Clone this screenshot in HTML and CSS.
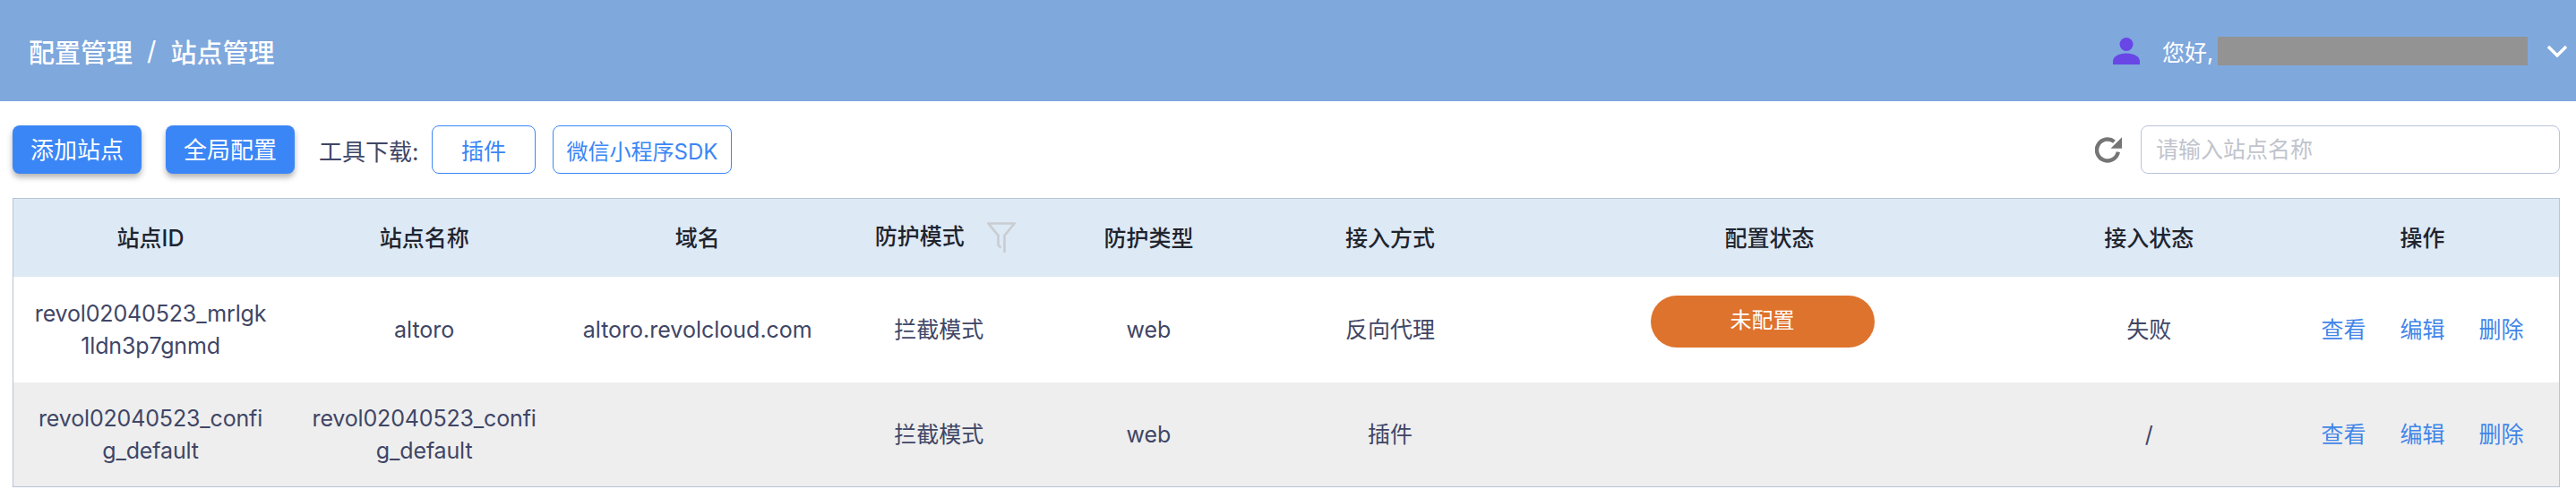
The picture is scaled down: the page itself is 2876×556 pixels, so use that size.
FILE: index.html
```html
<!DOCTYPE html>
<html lang="zh-CN">
<head>
    <meta charset="UTF-8">
    <meta name="viewport" content="width=device-width, initial-scale=1.0">
    <title>站点管理</title>
    <link rel="stylesheet" href="styles.css">
</head>
<body>
    <header class="topbar">
        <div class="breadcrumb">
            <span>配置管理</span>
            <span class="breadcrumb-sep">/</span>
            <span>站点管理</span>
        </div>
        <div class="user">
            <svg class="user-icon" viewBox="0 0 30 30" aria-hidden="true">
                <circle cx="15" cy="7.5" r="7.5" fill="#6847e6"/>
                <path d="M0 30v-3.5C0 21 6.5 17.5 15 17.5s15 3.5 15 9V30z" fill="#6847e6"/>
            </svg>
            <span class="user-hello">您好,</span>
            <span class="user-name"></span>
            <svg class="user-arrow" viewBox="0 0 22 14" aria-hidden="true">
                <path d="M1 2l10 10L21 2" fill="none" stroke="#fff" stroke-width="3.4"/>
            </svg>
        </div>
    </header>

    <div class="toolbar">
        <button class="btn btn-primary" type="button">添加站点</button>
        <button class="btn btn-primary" type="button">全局配置</button>
        <span class="tool-label">工具下载:</span>
        <button class="btn btn-outline btn-plugin" type="button">插件</button>
        <button class="btn btn-outline btn-sdk" type="button">微信小程序SDK</button>
        <svg class="refresh" viewBox="0 0 30 30" aria-hidden="true">
            <path d="M25.8 17.7A12 12 0 1 1 21.5 6.1" fill="none" stroke="#757575" stroke-width="4.4"/>
            <path d="M30 1.3v12.4H17.5z" fill="#757575"/>
        </svg>
        <input class="search" type="text" placeholder="请输入站点名称">
    </div>

    <div class="table-wrap">
        <table class="site-table">
            <colgroup>
                <col class="col-first">
                <col class="col-wide">
                <col class="col-wide">
                <col class="col-mode">
                <col class="col-mode">
                <col class="col-wide">
                <col class="col-status">
                <col class="col-wide">
                <col class="col-wide">
            </colgroup>
            <thead>
                <tr>
                    <th>站点ID</th>
                    <th>站点名称</th>
                    <th>域名</th>
                    <th class="th-filter">防护模式<svg class="filter" viewBox="0 0 32 36" aria-hidden="true">
                            <path d="M15.5 28.5l-3-2.5V15L1.5 1.5h29L19.5 15v19" fill="none" stroke="#c9cdd1" stroke-width="2.6"/>
                        </svg></th>
                    <th>防护类型</th>
                    <th>接入方式</th>
                    <th>配置状态</th>
                    <th>接入状态</th>
                    <th>操作</th>
                </tr>
            </thead>
            <tbody>
                <tr class="row-first">
                    <td class="id-cell">revol02040523_mrlgk1ldn3p7gnmd</td>
                    <td>altoro</td>
                    <td>altoro.revolcloud.com</td>
                    <td>拦截模式</td>
                    <td>web</td>
                    <td>反向代理</td>
                    <td><span class="pill">未配置</span></td>
                    <td>失败</td>
                    <td class="actions"><a href="#">查看</a><a href="#">编辑</a><a href="#">删除</a></td>
                </tr>
                <tr class="row-second">
                    <td class="id-cell">revol02040523_config_default</td>
                    <td class="id-cell">revol02040523_config_default</td>
                    <td></td>
                    <td>拦截模式</td>
                    <td>web</td>
                    <td>插件</td>
                    <td></td>
                    <td>/</td>
                    <td class="actions"><a href="#">查看</a><a href="#">编辑</a><a href="#">删除</a></td>
                </tr>
            </tbody>
        </table>
    </div>
</body>
</html>
```

FILE: styles.css
```css
* {
    box-sizing: border-box;
}
body {
    margin: 0;
    font-family: Inter, "Noto Sans CJK SC", sans-serif;
    font-size: 25px;
    color: #3f4666;
    background-color: #fff;
}
.topbar {
    height: 113px;
    padding: 0 10px 0 32px;
    display: flex;
    align-items: center;
    justify-content: space-between;
    background-color: #7fa8dd;
    color: #fff;
}
.breadcrumb {
    display: flex;
    align-items: center;
    font-size: 29px;
    font-weight: 500;
}
.breadcrumb-sep {
    margin: 0 16px;
    font-weight: 400;
}
.user {
    display: flex;
    align-items: center;
}
.user-icon {
    width: 30px;
    height: 30px;
    margin-right: 25px;
}
.user-hello {
    width: 62px;
}
.user-name {
    width: 346px;
    height: 32px;
    background-color: #939393;
}
.user-arrow {
    width: 22px;
    height: 14px;
    margin-left: 22px;
}
.toolbar {
    height: 54px;
    margin: 27px 18px 27px 14px;
    display: flex;
    align-items: center;
}
.btn {
    height: 54px;
    padding: 0;
    font-family: inherit;
    font-size: 25px;
    border-radius: 8px;
    cursor: pointer;
}
.btn-primary {
    width: 144px;
    margin-right: 27px;
    padding-bottom: 3px;
    font-size: 26px;
    color: #fff;
    background-color: #3b86f6;
    border: none;
    box-shadow: 0 4px 6px rgba(0, 0, 0, 0.3);
}
.btn-outline {
    color: #3b86f6;
    background-color: #fff;
    border: 1px solid #3b86f6;
}
.btn-plugin {
    width: 116px;
    margin-right: 19px;
}
.btn-sdk {
    width: 200px;
    font-size: 24px;
}
.tool-label {
    width: 126px;
    font-size: 26px;
    white-space: nowrap;
}
.refresh {
    width: 30px;
    height: 30px;
    margin-left: auto;
    margin-right: 21px;
}
.search {
    width: 468px;
    height: 54px;
    padding: 0 16px;
    font-family: inherit;
    font-size: 25px;
    border: 1px solid #b9c3dc;
    border-radius: 8px;
}
.search::placeholder {
    color: #c0c4cc;
}
.table-wrap {
    margin: 0 18px 0 14px;
    border: 1px solid #b8c4d6;
}
.site-table {
    width: 100%;
    table-layout: fixed;
    border-collapse: collapse;
}
.col-first {
    width: 306px;
}
.col-wide {
    width: 305px;
}
.col-mode {
    width: 234px;
}
.col-status {
    width: 542px;
}
.site-table th {
    height: 87px;
    padding: 0 0 3px;
    font-weight: 500;
    color: #20242e;
    text-align: center;
    background-color: #dde9f5;
}
.site-table td {
    padding: 0 20px;
    line-height: 36px;
    text-align: center;
    word-break: break-all;
}
.row-first td {
    height: 118px;
}
.row-second td {
    height: 116px;
    background-color: #eee;
}
.site-table .id-cell {
    padding: 0 22px;
    letter-spacing: -0.15px;
}
.site-table .th-filter {
    padding-left: 14px;
}
.filter {
    width: 32px;
    height: 36px;
    margin-left: 25px;
    vertical-align: middle;
}
.pill {
    display: block;
    width: 250px;
    height: 58px;
    margin: 0 0 18px 118px;
    line-height: 56px;
    color: #fff;
    font-size: 24px;
    background-color: #de732d;
    border-radius: 29px;
}
.site-table td.actions {
    padding: 0;
    white-space: nowrap;
}
.actions a {
    margin: 0 19px;
    color: #4286e8;
    text-decoration: none;
}
```
